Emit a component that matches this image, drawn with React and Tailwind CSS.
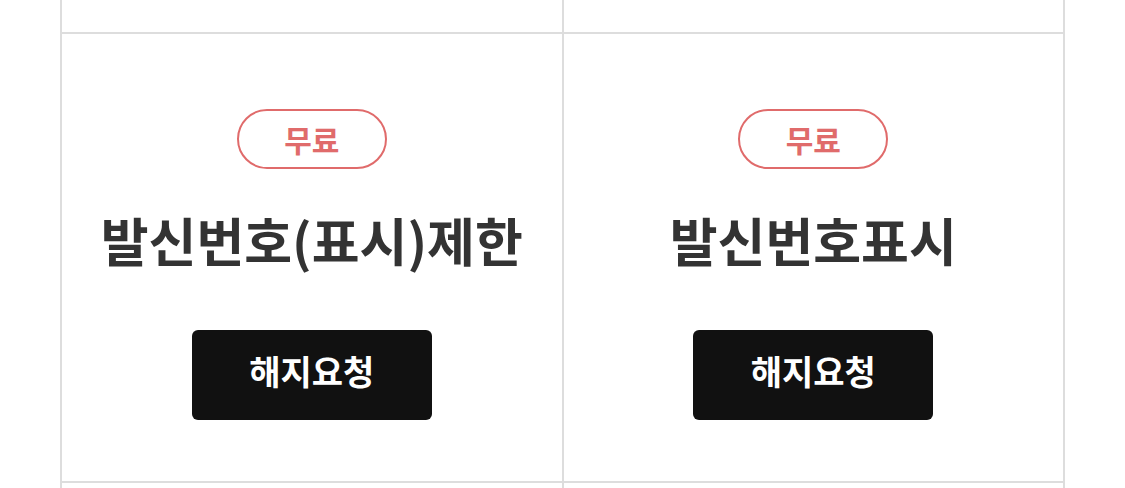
import React from "react";

const services = [
  { name: "발신번호(표시)제한", price: "무료" },
  { name: "발신번호표시", price: "무료" },
];

const ServiceCell = ({ service }) => {
  return (
    <div className="border-l-2 border-b-2 border-[#dddddd] h-[449px] flex flex-col items-center pt-[75px]">
      <span className="w-[150px] h-[60px] rounded-full border-2 border-[#e06b6b] text-[#e06b6b] text-[30px] font-bold flex items-center justify-center">
        {service.price}
      </span>
      <h3 className="mt-[40px] text-[52px] leading-[62px] font-bold text-[#333333]">
        {service.name}
      </h3>
      <button className="mt-[59px] w-[240px] h-[90px] pb-[10px] rounded-md bg-[#111111] text-white text-[34px] font-bold">
        해지요청
      </button>
    </div>
  );
};

const App = () => {
  return (
    <div
      className="w-[1125px] h-[488px] overflow-hidden bg-white"
      style={{ fontFamily: '"Noto Sans CJK KR", "Noto Sans", sans-serif' }}
    >
      <div className="ml-[60px] w-[1005px] grid grid-cols-2 border-r-2 border-[#dddddd]">
        <div className="border-l-2 border-b-2 border-[#dddddd] h-[34px]"></div>
        <div className="border-l-2 border-b-2 border-[#dddddd] h-[34px]"></div>
        {services.map((service, index) => (
          <ServiceCell key={index} service={service} />
        ))}
        <div className="border-l-2 border-[#dddddd] h-[40px]"></div>
        <div className="border-l-2 border-[#dddddd] h-[40px]"></div>
      </div>
    </div>
  );
};

export default App;
